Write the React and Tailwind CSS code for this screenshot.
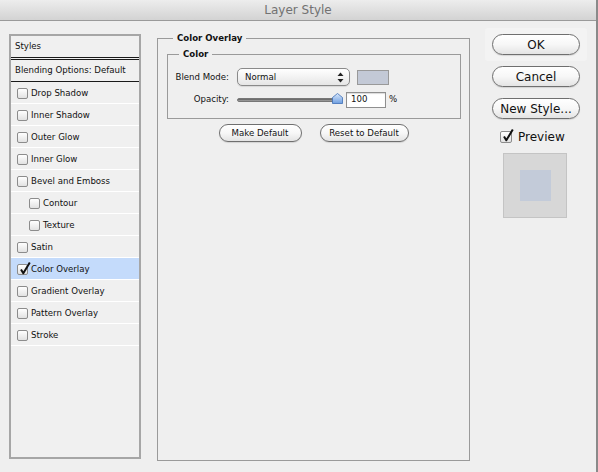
import { useState } from "react";

const effects = [
  { label: "Drop Shadow" },
  { label: "Inner Shadow" },
  { label: "Outer Glow" },
  { label: "Inner Glow" },
  { label: "Bevel and Emboss" },
  { label: "Contour", sub: true },
  { label: "Texture", sub: true },
  { label: "Satin" },
  { label: "Color Overlay", on: true },
  { label: "Gradient Overlay" },
  { label: "Pattern Overlay" },
  { label: "Stroke" },
];

// aqua-ish checkbox, with the tick poking out past the top right corner
const CheckBox = ({ checked, big }) => (
  <span
    className={`relative shrink-0 rounded-[2px] border border-[#8c8c8c] bg-linear-to-b from-white to-[#e2e2e2] ${
      big ? "w-[12px] h-[12px]" : "w-[11px] h-[11px]"
    }`}
  >
    {checked && (
      <svg
        className="absolute left-[0px] top-[-4px]"
        width="14"
        height="15"
        viewBox="0 0 14 15"
      >
        <path
          d="M3 8.5 L5.3 12.3 L11.8 1.5"
          fill="none"
          stroke="#111"
          strokeWidth="2"
          strokeLinejoin="round"
        />
      </svg>
    )}
  </span>
);

const PillButton = ({ children, className = "" }) => (
  <button
    className={`flex items-center justify-center rounded-full border border-[#6f6f6f] bg-linear-to-b from-white via-[#f7f7f7] to-[#e4e4e4] text-[#111] shadow-[0_1px_1px_rgba(0,0,0,0.12)] ${className}`}
  >
    {children}
  </button>
);

const StylesList = () => (
  <div className="ml-[9px] mt-[13px] w-[132px] h-[425px] shrink-0 border-2 border-[#a6a6a6] bg-[#f0f0f0]">
    <div className="h-[21px] pl-[4px] flex items-center">Styles</div>
    <div className="h-[3px] border-y border-[#1a1a1a]" />
    <div className="h-[22px] pl-[4px] flex items-center border-b border-[#1a1a1a]">
      Blending Options: Default
    </div>
    {effects.map((fx) => (
      <div
        key={fx.label}
        className={`h-[22px] pt-[1px] flex items-center gap-[3px] border-b border-white ${
          fx.sub ? "pl-[18px]" : "pl-[6px]"
        } ${fx.on ? "bg-[#c4dbfb]" : ""}`}
      >
        <CheckBox checked={fx.on} />
        <span>{fx.label}</span>
      </div>
    ))}
  </div>
);

const OverlayPanel = () => {
  const [opacity] = useState(100);

  return (
    <fieldset className="ml-[16px] mt-[11px] w-[313px] h-[429px] shrink-0 border border-[#9a9a9a]">
      <legend className="ml-[15px] px-[4px] h-[12px] leading-[12px] font-bold">
        Color Overlay
      </legend>

      <fieldset className="ml-[9px] mt-[4px] w-[294px] h-[71px] border border-[#9a9a9a]">
        <legend className="ml-[11px] px-[4px] h-[12px] leading-[12px] font-bold">
          Color
        </legend>

        {/* blend mode */}
        <div className="mt-[8px] flex items-center">
          <span className="w-[61px] text-right">Blend Mode:</span>
          <div className="ml-[8px] w-[113px] h-[18px] rounded-[5px] border border-[#8a8a8a] bg-linear-to-b from-white to-[#e6e6e6] flex items-center pl-[7px] pr-[5px] shadow-[0_1px_1px_rgba(0,0,0,0.1)]">
            <span className="flex-1">Normal</span>
            <svg width="7" height="11" viewBox="0 0 7 11">
              <path d="M3.5 0.5 L6.5 4 L0.5 4 Z" fill="#222" />
              <path d="M3.5 10.5 L6.5 7 L0.5 7 Z" fill="#222" />
            </svg>
          </div>
          <div className="ml-[7px] w-[32px] h-[15px] border border-[#999] bg-[#c3c9d6]" />
        </div>

        {/* opacity */}
        <div className="mt-[6px] h-[15px] flex items-center">
          <span className="w-[61px] text-right">Opacity:</span>
          <div className="ml-[8px] relative w-[106px] h-[15px] flex items-center">
            <div className="w-[101px] h-[4px] rounded-full bg-linear-to-b from-[#5c5c5c] to-[#a8a8a8] border border-[#777]" />
            <svg
              className="absolute left-[95px] top-[1px]"
              width="11"
              height="11"
              viewBox="0 0 11 11"
            >
              <defs>
                <linearGradient id="knob" x1="0" y1="0" x2="0" y2="1">
                  <stop offset="0" stopColor="#d9e8fb" />
                  <stop offset="1" stopColor="#6e9ee0" />
                </linearGradient>
              </defs>
              <path
                d="M5.5 0.5 L10.5 4.5 L10.5 10.5 L0.5 10.5 L0.5 4.5 Z"
                fill="url(#knob)"
                stroke="#3e6fb6"
                strokeWidth="0.8"
              />
            </svg>
          </div>
          <div className="ml-[3px] w-[40px] h-[16px] border border-[#8f8f8f] bg-white pl-[4px] flex items-center shadow-[inset_0_1px_1px_rgba(0,0,0,0.15)]">
            {opacity}
          </div>
          <span className="ml-[3px]">%</span>
        </div>
      </fieldset>

      <div className="mt-[5px] flex justify-center gap-[18px]">
        <PillButton className="w-[83px] h-[18px]">Make Default</PillButton>
        <PillButton className="w-[89px] h-[18px]">Reset to Default</PillButton>
      </div>
    </fieldset>
  );
};

const ActionColumn = () => (
  <div className="ml-[22px] mt-[13px] w-[88px] shrink-0 flex flex-col text-[12px]">
    <div className="-mx-[7px] -my-[6px] px-[7px] py-[6px] rounded-[3px] bg-[#f3f3f3]">
      <PillButton className="w-[88px] h-[21px]">OK</PillButton>
    </div>
    <PillButton className="mt-[11px] w-[88px] h-[21px]">Cancel</PillButton>
    <PillButton className="mt-[11px] w-[88px] h-[21px]">New Style...</PillButton>
    <div className="mt-[12px] ml-[8px] flex items-center gap-[6px] h-[12px]">
      <CheckBox checked big />
      <span>Preview</span>
    </div>
    <div className="mt-[10px] ml-[11px] w-[64px] h-[65px] border border-[#c4c4c4] bg-[#d7d7d7] flex items-center justify-center">
      <div className="w-[31px] h-[31px] bg-[#c3cbd9]" />
    </div>
  </div>
);

export default function App() {
  return (
    <div className="w-[598px] h-[472px] overflow-hidden flex flex-col bg-[#efefef] border-r-2 border-[#8a8a8a] font-['DejaVu_Sans',sans-serif] text-[8.6px] text-[#111]">
      <div className="h-[21px] shrink-0 flex items-center justify-center bg-linear-to-b from-[#ededed] to-[#d3d3d3] border-b border-[#9a9a9a] text-[12px] text-[#727272]">
        Layer Style
      </div>
      <div className="flex flex-1 items-start">
        <StylesList />
        <OverlayPanel />
        <ActionColumn />
      </div>
    </div>
  );
}
